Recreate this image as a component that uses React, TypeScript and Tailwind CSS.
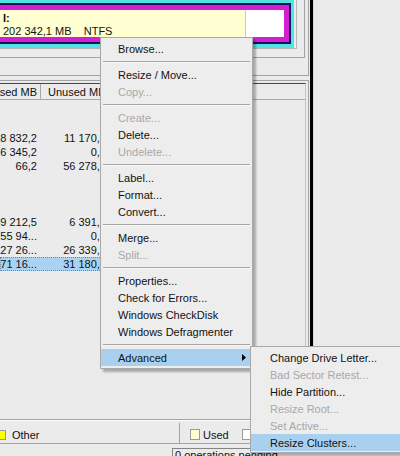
import React from 'react'
import clsx from 'clsx'

type Item = { label?: string; disabled?: boolean; active?: boolean; arrow?: boolean; sep?: boolean }

const mainMenu: Item[] = [
  { label: 'Browse...' },
  { sep: true },
  { label: 'Resize / Move...' },
  { label: 'Copy...', disabled: true },
  { sep: true },
  { label: 'Create...', disabled: true },
  { label: 'Delete...' },
  { label: 'Undelete...', disabled: true },
  { sep: true },
  { label: 'Label...' },
  { label: 'Format...' },
  { label: 'Convert...' },
  { sep: true },
  { label: 'Merge...' },
  { label: 'Split...', disabled: true },
  { sep: true },
  { label: 'Properties...' },
  { label: 'Check for Errors...' },
  { label: 'Windows CheckDisk' },
  { label: 'Windows Defragmenter' },
  { sep: true },
  { label: 'Advanced', active: true, arrow: true },
]

const subMenu: Item[] = [
  { label: 'Change Drive Letter...' },
  { label: 'Bad Sector Retest...', disabled: true },
  { label: 'Hide Partition...' },
  { label: 'Resize Root...', disabled: true },
  { label: 'Set Active...', disabled: true },
  { label: 'Resize Clusters...', active: true },
]

const rows: (string[] | null)[] = [
  null,
  null,
  ['18 832,2', '11 170,8'],
  ['16 345,2', '0,0'],
  ['66,2', '56 278,1'],
  null,
  null,
  null,
  ['39 212,5', '6 391,5'],
  ['155 94...', '0,0'],
  ['227 26...', '26 339,7'],
  ['171 16...', '31 180,4'],
]

function MenuRow({ item, pad }: { item: Item; pad: string }) {
  if (item.sep) {
    return (
      <div className="flex h-[9px] flex-col justify-center px-[2px]">
        <div className="h-px w-full bg-[#a6a6a6]" />
        <div className="h-px w-full bg-[#f8f8f8]" />
      </div>
    )
  }
  return (
    <div
      className={clsx(
        'flex h-[17px] items-center whitespace-nowrap pr-[6px]',
        pad,
        item.active && 'bg-[#a9d1ef]',
        item.disabled ? 'text-[#a8a8a8]' : 'text-[#111]'
      )}
    >
      <span>{item.label}</span>
      {item.arrow && (
        <svg className="ml-auto" width="4" height="7" viewBox="0 0 4 7">
          <path d="M0 0L4 3.5L0 7Z" fill="#000" />
        </svg>
      )}
    </div>
  )
}

export default function App() {
  return (
    <div className="relative h-[456px] w-[400px] overflow-hidden bg-[#ebebeb] font-['Liberation_Sans',Arial,sans-serif] text-[11px] leading-[14px] text-[#111]">
      <div className="flex h-[419px]">
        <div className="flex w-[310px] flex-col">
          {/* disk map */}
          <div className="h-[76px] w-[309px] border-b border-r border-[#a3a3a3]">
            <div className="h-[58px] w-[305px] border-b border-r border-[#a3a3a3]">
              <div className="h-[49px] w-[297px] border-b border-r border-[#b5b5b5]">
                <div className="ml-[-20px] h-[48px] w-[314px] bg-[#52e2e2] pb-[4px] pl-[3px] pr-[3px] pt-[3px]">
                  <div className="h-full border-2 border-[#14145c]">
                    <div className="flex h-full border-[5px] border-[#d21fd2]">
                      <div className="flex-1 bg-[#ffffd2] pl-[13px] pt-[2px] leading-[13px]">
                        <div className="font-bold">I:</div>
                        <div className="whitespace-pre">202 342,1 MB    NTFS</div>
                      </div>
                      <div className="w-[39px] border-l border-[#c8c8c8] bg-white" />
                    </div>
                  </div>
                </div>
              </div>
            </div>
          </div>

          {/* partition list */}
          <div className="mt-[4px] flex w-[309px] flex-1 flex-col border-r border-t border-[#a3a3a3]">
            <div className="mt-[2px] flex w-[306px] flex-1 flex-col overflow-hidden border-r border-t border-[#454545] border-r-[#c4c4c4]">
              <div className="flex h-[16px] shrink-0 items-center border-b border-[#a8a8a8]">
                <div className="flex h-full w-[41px] items-center justify-end overflow-hidden whitespace-nowrap border-r border-[#a8a8a8] pr-[3px]">
                  <span className="shrink-0">Used MB</span>
                </div>
                <div className="whitespace-nowrap pl-[7px]">Unused MB</div>
              </div>
              <div className="pt-[3px]">
                {rows.map((r, i) => (
                  <div
                    key={i}
                    className={clsx(
                      'flex h-[14px] items-center',
                      i === 11 && 'w-[120px] bg-[#a9d3f1] outline-1 outline-dotted outline-[#6d8aa0] -outline-offset-1'
                    )}
                  >
                    {r && (
                      <>
                        <div className="flex w-[41px] justify-end overflow-hidden whitespace-nowrap pr-[4px]">
                          <span className="shrink-0">{r[0]}</span>
                        </div>
                        <div className="flex w-[68px] justify-end overflow-hidden whitespace-nowrap pr-[3px]">
                          <span className="shrink-0">{r[1]}</span>
                        </div>
                      </>
                    )}
                  </div>
                ))}
              </div>
            </div>
          </div>
        </div>
        <div className="w-[3px] bg-black" />
        <div className="flex-1 border-l border-[#d8d8d8] bg-[#ebebeb]" />
      </div>

      {/* legend */}
      <div className="h-px bg-[#a3a3a3]" />
      <div className="h-px bg-white" />
      <div className="flex h-[22px] items-end">
        <div className="flex h-[20px] w-[180px] items-center border-r border-[#a3a3a3] pt-[3px]">
          <div className="ml-[-4px] h-[10px] w-[10px] border border-[#9a9a9a] bg-[#ffff00]" />
          <span className="ml-[6px]">Other</span>
        </div>
        <div className="flex h-[20px] items-center pl-[10px] pt-[3px]">
          <div className="h-[11px] w-[10px] border border-[#9a9a9a] bg-[#ffffd2]" />
          <span className="ml-[3px]">Used</span>
          <div className="ml-[13px] h-[11px] w-[10px] border border-[#9a9a9a] bg-white" />
        </div>
      </div>
      <div className="h-px bg-[#a3a3a3]" />

      {/* status bar */}
      <div className="pt-[4px]">
        <div className="ml-[172px] border-l border-t border-[#858585] pl-[2px] leading-[12px]">
          0 operations pending
        </div>
      </div>

      {/* context menu */}
      <div className="absolute left-[100px] top-[37px] w-[153px] border border-[#a8a8a8] bg-[#ededed] py-[2px] shadow-[3px_3px_2px_rgba(0,0,0,0.28)]">
        {mainMenu.map((it, i) => (
          <MenuRow key={i} item={it} pad="pl-[17px]" />
        ))}
      </div>

      {/* submenu */}
      <div className="absolute left-[250px] top-[346px] w-[170px] border border-[#a8a8a8] bg-[#ededed] pb-[1px] pt-[2px] shadow-[3px_3px_2px_rgba(0,0,0,0.28)]">
        {subMenu.map((it, i) => (
          <MenuRow key={i} item={it} pad="pl-[19px]" />
        ))}
      </div>
    </div>
  )
}
